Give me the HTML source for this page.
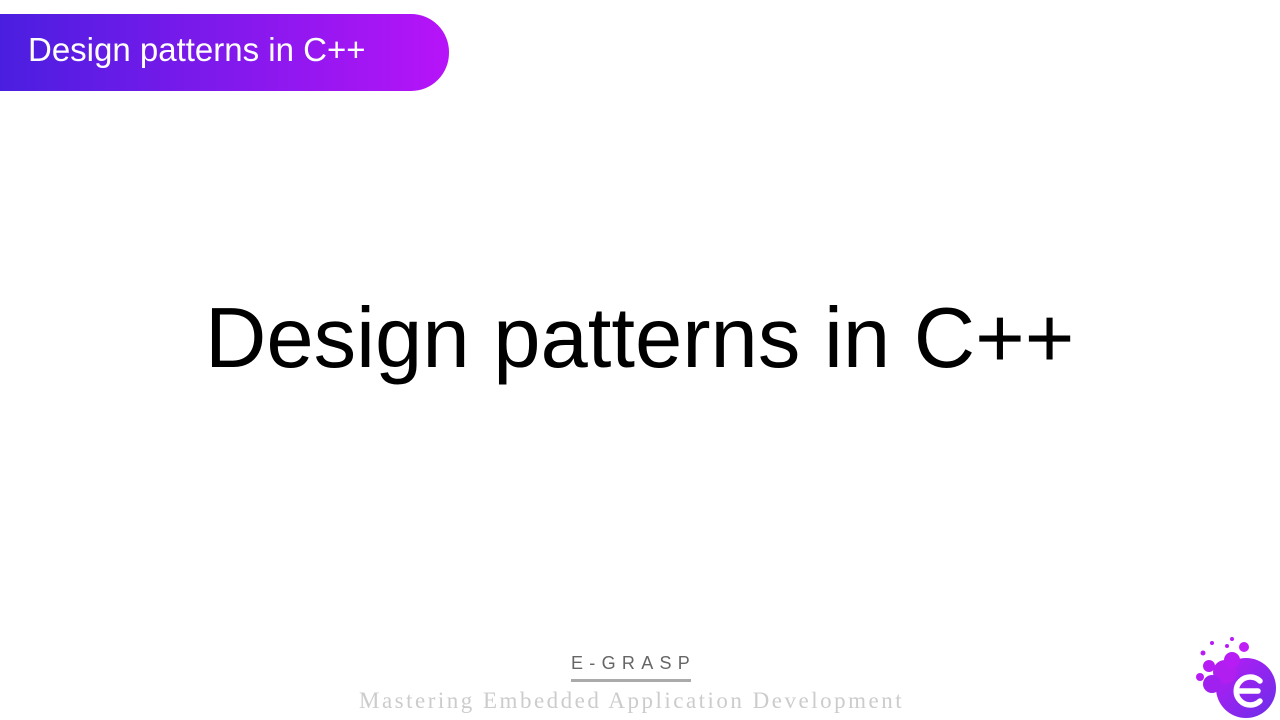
<!DOCTYPE html>
<html><head><style>
body{margin:0;width:1280px;height:720px;background:#fff;position:relative;overflow:hidden;font-family:"Liberation Sans",sans-serif}
.ban{position:absolute;left:0;top:14px;width:449px;height:77px;border-radius:0 38px 38px 0;background:linear-gradient(90deg,#4a1ee0,#b714f8)}
.ban span{position:absolute;left:28px;top:17px;color:#fff;font-size:33px;white-space:nowrap}
.t{position:absolute;left:205px;top:290px;font-size:85px;white-space:nowrap;color:#000}
.eg{position:absolute;left:571px;top:653px;font-size:18px;letter-spacing:6.3px;color:#666}
.ln{position:absolute;left:571px;top:679px;width:120px;height:3px;background:#aaa}
.m{position:absolute;left:359px;top:688px;font-family:"Liberation Serif",serif;font-size:23px;color:#ccc;letter-spacing:2.5px;white-space:nowrap}
</style></head><body>
<div class="ban"><span>Design patterns in C++</span></div>
<div class="t">Design patterns in C++</div>
<div class="eg">E-GRASP</div>
<div class="ln"></div>
<div class="m">Mastering Embedded Application Development</div>
<svg style="position:absolute;left:1180px;top:630px" width="100" height="90" viewBox="0 0 100 90">
<defs><linearGradient id="g" x1="0" y1="0" x2="1" y2="1"><stop offset="0" stop-color="#b81cf5"/><stop offset="1" stop-color="#6a2ee8"/></linearGradient></defs>
<circle cx="66" cy="58" r="30" fill="url(#g)"/>
<circle cx="45" cy="42" r="12" fill="#b01ef0"/>
<circle cx="52" cy="30" r="8" fill="#b81cf5"/>
<circle cx="32" cy="54" r="9" fill="#a020f0"/>
<circle cx="64" cy="17" r="5" fill="#c020f5"/>
<circle cx="29" cy="36" r="6" fill="#b81cf5"/>
<circle cx="20" cy="47" r="4" fill="#b81cf5"/>
<circle cx="23" cy="23" r="2.5" fill="#b81cf5"/>
<circle cx="32" cy="13" r="2" fill="#b81cf5"/>
<circle cx="52" cy="9" r="2" fill="#b81cf5"/>
<circle cx="47" cy="16" r="2" fill="#b81cf5"/>
<path d="M80 51 A14 14 0 1 0 80 71 M58 61 H78" stroke="#fff" stroke-width="5.5" fill="none" stroke-linecap="round"/>
</svg>
</body></html>
